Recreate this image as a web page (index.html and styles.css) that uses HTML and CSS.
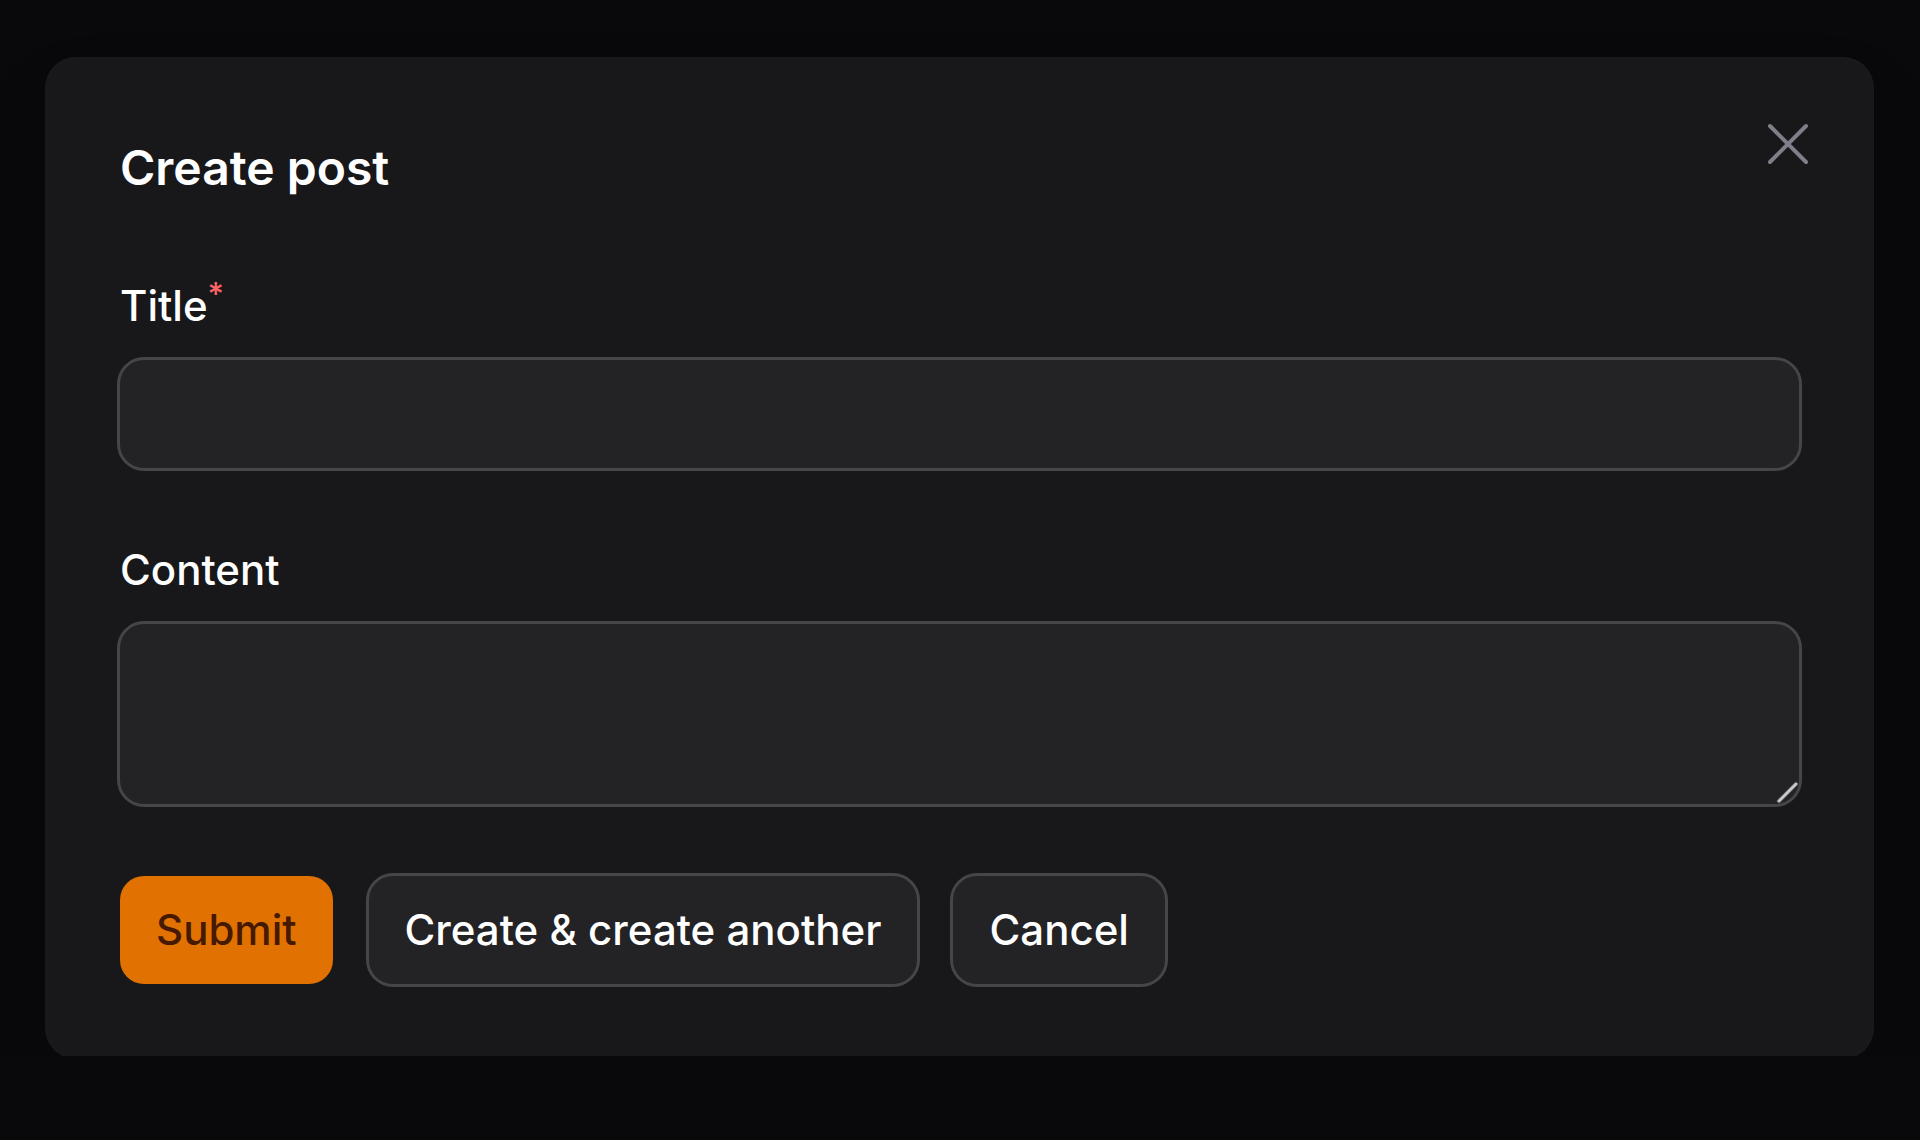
FILE: index.html
```html
<!DOCTYPE html>
<html>

<head>
  <meta charset="UTF-8">
  <title>Create post</title>
  <link rel="stylesheet" href="styles.css">
</head>

<body>

  <div class="page">
    <div class="modal">
      <button class="close" type="button" aria-label="Close">
        <svg viewBox="0 0 80 80" width="80" height="80">
          <path d="M22 22 58 58M58 22 22 58" />
        </svg>
      </button>

      <h2 class="heading">Create post</h2>

      <div class="field">
        <label for="title">Title<sup>*</sup></label>
        <input id="title" type="text" class="control">
      </div>

      <div class="field">
        <label for="content">Content</label>
        <div class="area-wrap">
          <textarea id="content" class="control area"></textarea>
        </div>
      </div>

      <div class="actions">
        <button type="button" class="btn primary">Submit</button>
        <button type="button" class="btn">Create &amp; create another</button>
        <button type="button" class="btn">Cancel</button>
      </div>
    </div>
  </div>

</body>

</html>
```

FILE: styles.css
```css
html {
  background: #09090b;
}

body {
  margin: 0;
  font-family: Inter, "Noto Sans", sans-serif;
  color: #fff;
}

.page {
  padding: 60px 0 0 48px;
}

.modal {
  position: relative;
  width: 1823px;
  box-sizing: border-box;
  padding: 72px;
  background: #18181b;
  border-radius: 28px;
  box-shadow: 0 0 0 3px rgba(255, 255, 255, 0.07), 0 40px 80px -20px rgba(0, 0, 0, 0.35);
}

.close {
  position: absolute;
  top: 44px;
  right: 43px;
  width: 80px;
  height: 80px;
  padding: 0;
  border: 0;
  background: none;
}

.close svg {
  display: block;
  fill: none;
  stroke: #7f7f89;
  stroke-width: 4;
  stroke-linecap: round;
}

.heading {
  margin: 0;
  font-size: 48px;
  line-height: 72px;
  font-weight: 600;
}

.field {
  margin-top: 72px;
}

.field label {
  display: block;
  font-size: 42px;
  line-height: 60px;
  font-weight: 500;
}

.field sup {
  position: relative;
  top: -0.5em;
  font-size: 75%;
  line-height: 0;
  vertical-align: baseline;
  color: #ff6467;
}

.control {
  display: block;
  width: 100%;
  height: 108px;
  box-sizing: border-box;
  margin: 24px 0 0;
  padding: 24px 36px;
  border: 0;
  border-radius: 24px;
  outline: none;
  background: rgba(255, 255, 255, 0.05);
  box-shadow: 0 0 0 3px rgba(255, 255, 255, 0.2);
  font: inherit;
  font-size: 42px;
  color: #fff;
}

.area-wrap {
  position: relative;
}

.area {
  height: 180px;
  resize: none;
}

/* resize grip in the bottom corner */
.area-wrap::after {
  content: "";
  position: absolute;
  right: -2px;
  bottom: 10px;
  width: 27px;
  height: 3px;
  border-radius: 2px;
  background: #c9c9cc;
  box-shadow: 0 0 0 1px #3b3b3e;
  transform: rotate(-45deg);
}

.actions {
  display: flex;
  gap: 36px;
  margin-top: 72px;
}

.btn {
  padding: 24px 36px;
  border: 0;
  border-radius: 24px;
  font-family: inherit;
  font-size: 42px;
  line-height: 60px;
  font-weight: 500;
  color: #fff;
  background: rgba(255, 255, 255, 0.05);
  box-shadow: 0 0 0 3px rgba(255, 255, 255, 0.2);
}

.primary {
  background: #e17100;
  color: #461901;
  box-shadow: none;
}
```
